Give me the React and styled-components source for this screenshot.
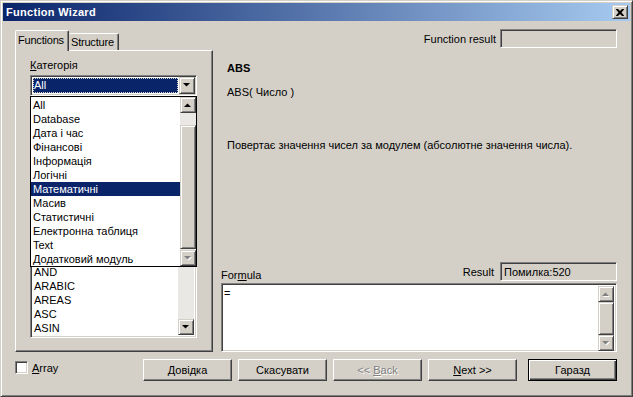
import React from 'react';
import styled, { createGlobalStyle, css } from 'styled-components';

const Global = createGlobalStyle`
  html, body { margin: 0; padding: 0; background: #D4D0C8; }
  body { font-family: "Liberation Sans", Arial, sans-serif; font-size: 11px; color: #000; }
  * { box-sizing: border-box; }
  u { text-decoration: underline; text-underline-offset: 1px; }
`;

const raisedBtn = css`
  border: 1px solid;
  border-color: #fff #404040 #404040 #fff;
  box-shadow: inset -1px -1px #808080;
  background: #D4D0C8;
`;

const raisedScroll = css`
  border: 1px solid;
  border-color: #D4D0C8 #404040 #404040 #D4D0C8;
  box-shadow: inset 1px 1px #fff, inset -1px -1px #808080;
  background: #D4D0C8;
`;

const sunken = css`
  border: 1px solid;
  border-color: #808080 #fff #fff #808080;
  box-shadow: inset 1px 1px #404040, inset -1px -1px #D4D0C8;
`;

const Window = styled.div`
  width: 633px;
  height: 397px;
  display: flex;
  flex-direction: column;
  border: 1px solid;
  border-color: #D4D0C8 #404040 #404040 #D4D0C8;
  box-shadow: inset 1px 1px #fff, inset -1px -1px #808080;
  padding: 2px;
  background: #D4D0C8;
  overflow: hidden;
`;

const TitleBar = styled.div`
  height: 18px;
  flex: none;
  display: flex;
  align-items: center;
  padding: 0 2px 0 2px;
  background: linear-gradient(to right, #0A246A, #A6CAF0);
`;

const TitleText = styled.div`
  color: #fff;
  font-weight: bold;
  font-size: 11px;
  margin-left: 1px;
  letter-spacing: 0.3px;
`;

const CloseBtn = styled.div`
  ${raisedScroll};
  margin-left: auto;
  width: 16px;
  height: 14px;
  display: flex;
  align-items: center;
  justify-content: center;
`;

const Main = styled.div`
  display: grid;
  grid-template-columns: 198px 396px;
  grid-template-rows: 323px;
  column-gap: 8px;
  padding: 8px 0 0 12px;
  height: 331px;
  flex: none;
`;

const LeftCol = styled.div`
  display: flex;
  flex-direction: column;
  min-height: 0;
`;

const TabsRow = styled.div`
  height: 21px;
  flex: none;
  display: flex;
  align-items: flex-end;
  position: relative;
  z-index: 2;
`;

const Tab = styled.div`
  display: flex;
  align-items: center;
  background: #D4D0C8;
  border: 1px solid;
  border-color: #fff #404040 transparent #fff;
  border-bottom: none;
  border-radius: 2px 2px 0 0;
  box-shadow: inset -1px 0 #808080;
  white-space: nowrap;
  letter-spacing: -0.2px;
  ${(p) =>
    p.$active
      ? css`
          height: 21px;
          margin-bottom: -1px;
          width: 54px;
          padding: 0 0 3px 2px;
        `
      : css`
          height: 17px;
          width: 50px;
          padding: 0 0 1px 2px;
          border-left: none;
        `}
`;

const Panel = styled.div`
  flex: 1;
  min-height: 0;
  display: flex;
  flex-direction: column;
  border: 1px solid;
  border-color: #fff #404040 #404040 #fff;
  box-shadow: inset -1px -1px #808080;
  padding: 8px 15px 13px 14px;
`;

const Label = styled.div`
  line-height: 13px;
  height: 13px;
  flex: none;
  white-space: nowrap;
`;

const ComboWrap = styled.div`
  position: relative;
  margin-top: 3px;
  flex: none;
  z-index: 5;
`;

const Combo = styled.div`
  ${sunken};
  height: 21px;
  background: #fff;
  display: flex;
  padding: 1px;
`;

const ComboField = styled.div`
  flex: 1;
  margin: 1px;
  background: #0A246A;
  color: #fff;
  line-height: 14px;
  padding-left: 1px;
  outline: 1px dotted #D4D0C8;
  outline-offset: -1px;
`;

const ComboButton = styled.div`
  ${raisedScroll};
  width: 16px;
  height: 17px;
  display: flex;
  align-items: center;
  justify-content: center;
`;

const Dropdown = styled.div`
  position: absolute;
  top: 100%;
  left: 0;
  right: 0;
  height: 171px;
  background: #fff;
  border: 1px solid #000;
  display: flex;
`;

const Items = styled.div`
  flex: 1;
  min-width: 0;
  display: flex;
  flex-direction: column;
  justify-content: ${(p) => (p.$bottom ? 'flex-end' : 'flex-start')};
  padding-top: ${(p) => p.$pt || 0}px;
  overflow: hidden;
`;

const Item = styled.div`
  height: 14px;
  line-height: 14px;
  flex: none;
  padding-left: ${(p) => p.$pl || 2}px;
  white-space: nowrap;
  background: ${(p) => (p.$sel ? '#0A246A' : 'transparent')};
  color: ${(p) => (p.$sel ? '#fff' : '#000')};
`;

const VScroll = styled.div`
  width: 16px;
  flex: none;
  display: flex;
  flex-direction: column;
  background: #EAE8E4;
`;

const SBtn = styled.div`
  ${raisedScroll};
  width: 16px;
  height: 16px;
  flex: none;
  display: flex;
  align-items: center;
  justify-content: center;
`;

const Thumb = styled.div`
  ${raisedScroll};
  width: 16px;
  height: ${(p) => p.$h}px;
  flex: none;
`;

const Track = styled.div`
  flex: ${(p) => (p.$grow ? 1 : 'none')};
  height: ${(p) => (p.$grow ? 'auto' : `${p.$h}px`)};
`;

const FnList = styled.div`
  ${sunken};
  margin-top: 27px;
  flex: 1;
  min-height: 0;
  background: #fff;
  display: flex;
  padding: 2px;
  overflow: hidden;
`;

const RightCol = styled.div`
  display: flex;
  flex-direction: column;
  min-height: 0;
`;

const ResultRow = styled.div`
  height: 19px;
  flex: none;
  display: flex;
  justify-content: flex-end;
  align-items: center;
  gap: 4px;
`;

const ReadField = styled.div`
  ${sunken};
  width: 117px;
  height: 19px;
  background: #D4D0C8;
  line-height: 15px;
  padding: 2px 3px;
  white-space: nowrap;
`;

const Info = styled.div`
  flex: 1;
  min-height: 0;
  padding: 14px 0 0 6px;
  display: flex;
  flex-direction: column;
`;

const FnName = styled.div`
  font-weight: bold;
  line-height: 13px;
`;

const Signature = styled.div`
  margin-top: 11px;
  line-height: 13px;
`;

const Description = styled.div`
  margin-top: 40px;
  line-height: 13px;
`;

const FormulaHeader = styled.div`
  height: 21px;
  flex: none;
  display: flex;
  justify-content: space-between;
`;

const FormulaLabel = styled.div`
  align-self: flex-end;
  line-height: 13px;
  margin-bottom: 1px;
`;

const ResultGroup = styled.div`
  display: flex;
  align-items: center;
  gap: 6px;
  height: 19px;
`;

const FormulaBox = styled.div`
  ${sunken};
  height: 69px;
  flex: none;
  background: #fff;
  display: flex;
  padding: 2px;
`;

const FormulaText = styled.div`
  flex: 1;
  padding: 1px 0 0 0;
  line-height: 13px;
`;

const Footer = styled.div`
  display: flex;
  align-items: flex-start;
  padding: 7px 13px 0 12px;
  height: 29px;
  flex: none;
`;

const CheckGroup = styled.div`
  display: flex;
  align-items: center;
  gap: 4px;
  margin-top: 2px;
`;

const CheckBox = styled.div`
  ${sunken};
  width: 13px;
  height: 13px;
  background: #fff;
`;

const Buttons = styled.div`
  margin-left: auto;
  display: flex;
  gap: 6px;
`;

const Button = styled.div`
  ${raisedBtn};
  width: 89px;
  height: 22px;
  display: flex;
  align-items: center;
  justify-content: center;
  color: ${(p) => (p.$disabled ? '#808080' : '#000')};
  text-shadow: ${(p) => (p.$disabled ? '1px 1px #fff' : 'none')};
  ${(p) =>
    p.$default &&
    css`
      border: 1px solid #000;
      box-shadow: inset 1px 1px #fff, inset -1px -1px #404040, inset -2px -2px #808080;
      margin-left: 5px;
    `}
`;

const Arrow = ({ dir = 'down', disabled }) => {
  const pts = dir === 'up' ? '0,4 7,4 3.5,0.5' : '0,0 7,0 3.5,3.5';
  return (
    <svg width="8" height="5" viewBox="0 0 8 5" style={{ overflow: 'visible' }}>
      {disabled && <polygon points={pts} fill="#fff" transform="translate(1,1)" />}
      <polygon points={pts} fill={disabled ? '#808080' : '#000'} />
    </svg>
  );
};

const CloseGlyph = () => (
  <svg width="8" height="7" viewBox="0 0 8 7">
    <path d="M0 0h2l2 2 2-2h2v0.5L5.5 3.5 8 6.5V7H6L4 5 2 7H0v-0.5L2.5 3.5 0 0.5z" fill="#000" />
  </svg>
);

const categories = [
  'All',
  'Database',
  'Дата і час',
  'Фінансові',
  'Інформація',
  'Логічні',
  'Математичні',
  'Масив',
  'Статистичні',
  'Електронна таблиця',
  'Text',
  'Додатковий модуль',
];

const functions = ['AND', 'ARABIC', 'AREAS', 'ASC', 'ASIN'];

export default function App() {
  return (
    <>
      <Global />
      <Window>
        <TitleBar>
          <TitleText>Function Wizard</TitleText>
          <CloseBtn>
            <CloseGlyph />
          </CloseBtn>
        </TitleBar>
        <Main>
          <LeftCol>
            <TabsRow>
              <Tab $active>Functions</Tab>
              <Tab>Structure</Tab>
            </TabsRow>
            <Panel>
              <Label>
                <u>К</u>атегорія
              </Label>
              <ComboWrap>
                <Combo>
                  <ComboField>All</ComboField>
                  <ComboButton>
                    <Arrow dir="down" />
                  </ComboButton>
                </Combo>
                <Dropdown>
                  <Items $pt={1}>
                    {categories.map((c) => (
                      <Item key={c} $sel={c === 'Математичні'}>
                        {c}
                      </Item>
                    ))}
                  </Items>
                  <VScroll>
                    <SBtn>
                      <Arrow dir="up" />
                    </SBtn>
                    <Track $h={12} />
                    <Thumb $h={124} />
                    <Track $grow />
                    <SBtn>
                      <Arrow dir="down" disabled />
                    </SBtn>
                  </VScroll>
                </Dropdown>
              </ComboWrap>
              <FnList>
                <Items $bottom>
                  {functions.map((f) => (
                    <Item key={f} $pl={1}>
                      {f}
                    </Item>
                  ))}
                </Items>
                <VScroll>
                  <SBtn>
                    <Arrow dir="up" />
                  </SBtn>
                  <Thumb $h={8} />
                  <Track $grow />
                  <SBtn>
                    <Arrow dir="down" />
                  </SBtn>
                </VScroll>
              </FnList>
            </Panel>
          </LeftCol>
          <RightCol>
            <ResultRow>
              <span>Function result</span>
              <ReadField />
            </ResultRow>
            <Info>
              <FnName>ABS</FnName>
              <Signature>ABS( Число )</Signature>
              <Description>Повертає значення чисел за модулем (абсолютне значення числа).</Description>
            </Info>
            <FormulaHeader>
              <FormulaLabel>
                For<u>m</u>ula
              </FormulaLabel>
              <ResultGroup>
                <span>Result</span>
                <ReadField>Помилка:520</ReadField>
              </ResultGroup>
            </FormulaHeader>
            <FormulaBox>
              <FormulaText>=</FormulaText>
              <VScroll>
                <SBtn>
                  <Arrow dir="up" disabled />
                </SBtn>
                <Thumb $h={33} />
                <SBtn>
                  <Arrow dir="down" disabled />
                </SBtn>
              </VScroll>
            </FormulaBox>
          </RightCol>
        </Main>
        <Footer>
          <CheckGroup>
            <CheckBox />
            <span>
              <u>A</u>rray
            </span>
          </CheckGroup>
          <Buttons>
            <Button>
              <span>
                <u>Д</u>овідка
              </span>
            </Button>
            <Button>Скасувати</Button>
            <Button $disabled>
              <span>
                &lt;&lt; <u>B</u>ack
              </span>
            </Button>
            <Button>
              <span>
                <u>N</u>ext &gt;&gt;
              </span>
            </Button>
            <Button $default>Гаразд</Button>
          </Buttons>
        </Footer>
      </Window>
    </>
  );
}
